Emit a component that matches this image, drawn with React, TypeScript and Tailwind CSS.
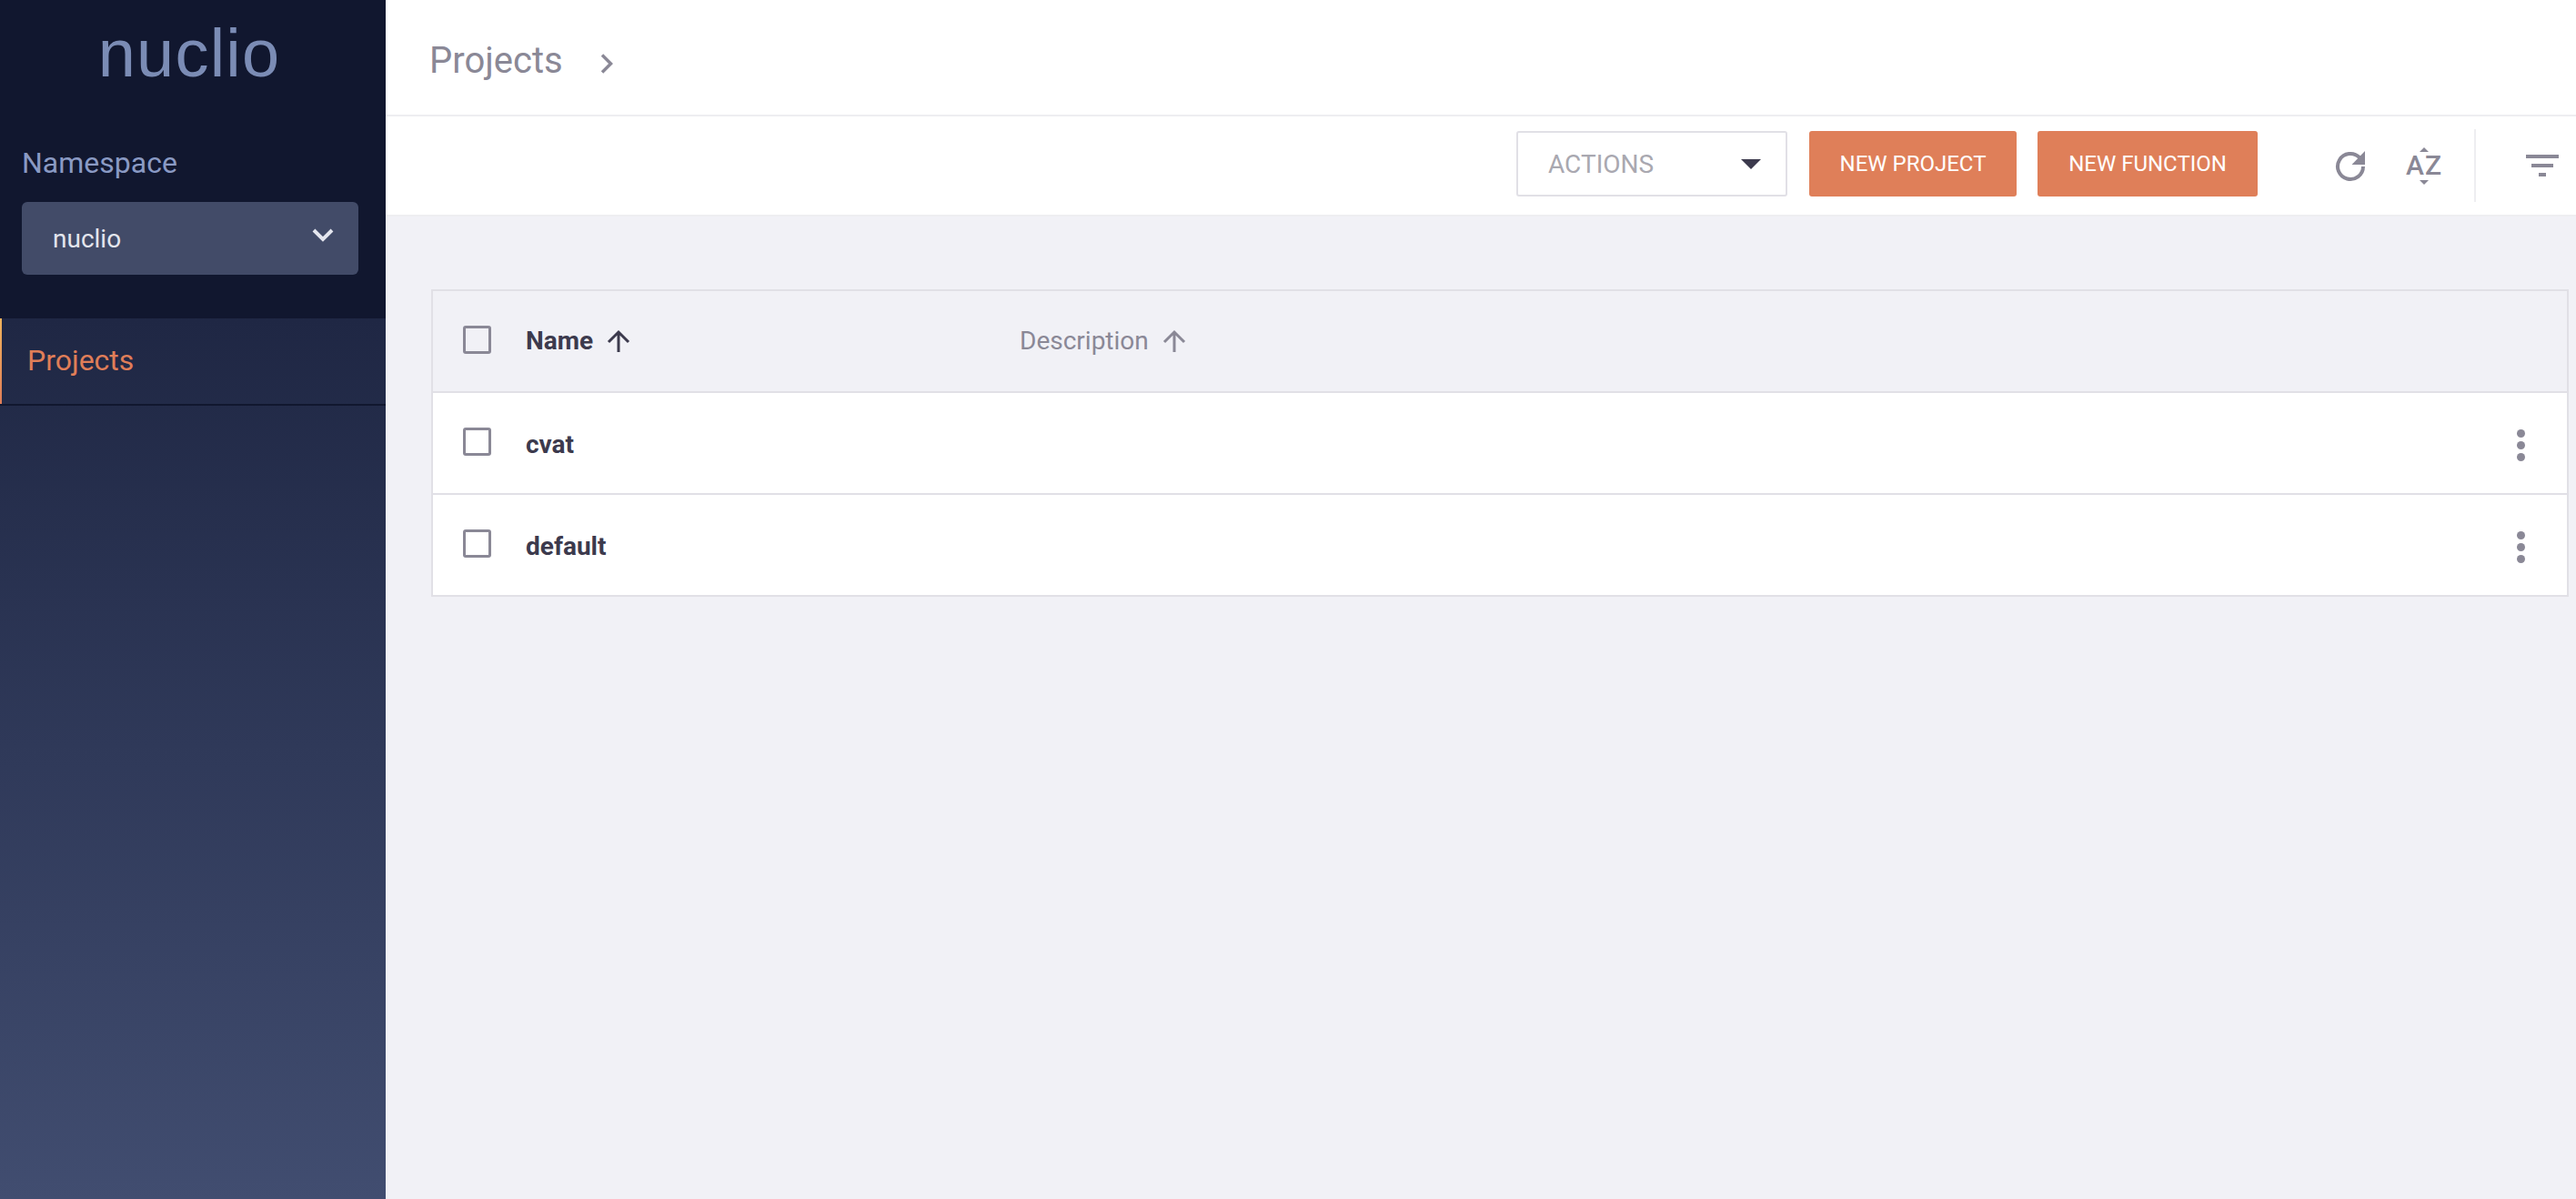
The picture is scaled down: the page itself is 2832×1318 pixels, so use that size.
import React from "react";

const Checkbox = () => (
  <span className="block w-[31px] h-[31px] rounded-[3px] border-[3px] border-[#8a8896] shrink-0" />
);

const ArrowUp = ({ color }: { color: string }) => (
  <svg width="26" height="26" viewBox="0 0 26 26" fill="none" stroke={color} strokeWidth="3">
    <path d="M13 25V3.5M2 14 13 3l11 11" />
  </svg>
);

const Dots = () => (
  <div className="flex flex-col gap-[4.4px] mr-[46px] mt-[5px]">
    <span className="block w-[9px] h-[9px] rounded-full bg-[#8a8896]" />
    <span className="block w-[9px] h-[9px] rounded-full bg-[#8a8896]" />
    <span className="block w-[9px] h-[9px] rounded-full bg-[#8a8896]" />
  </div>
);

const Row = ({ name }: { name: string }) => (
  <div className="h-[112px] last:h-[110px] flex items-center justify-between bg-white border-b-[2px] border-[#e1e0e6] last:border-b-0">
    <div className="flex items-center">
      <div className="ml-[33px] -mt-[4px]">
        <Checkbox />
      </div>
      <span className="ml-[38px] mt-[3px] text-[28px] font-bold text-[#3c3a4d]">{name}</span>
    </div>
    <Dots />
  </div>
);

export default function App() {
  return (
    <div className="flex h-[1318px] w-[2832px] overflow-hidden font-['Roboto',sans-serif] bg-[#f1f1f6]">
      <aside className="w-[424px] shrink-0 flex flex-col">
        <div className="h-[350px] bg-[#11172f] px-[24px] flex flex-col shrink-0">
          <div className="h-[120px] flex items-start justify-center pt-[16px] pr-[8px]">
            <span className="font-['Liberation_Sans',sans-serif] text-[74px] leading-[85px] tracking-[1.2px] text-[#7b8cb5]">nuclio</span>
          </div>
          <div className="mt-[39px] text-[32px] leading-[40px] text-[#8a9ac4]">Namespace</div>
          <div className="mt-[23px] w-[370px] h-[80px] rounded-[6px] bg-[#424b68] flex items-center justify-between pl-[34px] pr-[27px]">
            <span className="text-[28px] mt-[1px] text-[#e4e6ee]">nuclio</span>
            <svg width="24" height="16" viewBox="0 0 24 16" fill="none" stroke="#e4e6ee" strokeWidth="4" className="-mt-[6px]">
              <path d="M2 2l10 10L22 2" />
            </svg>
          </div>
        </div>
        <div className="flex-1 bg-gradient-to-b from-[#1f2744] to-[#414d70]">
          <div className="h-[96px] border-b-[2px] border-[#11172f] flex items-center pl-[30px] pb-[3px] relative">
            <span className="absolute left-0 top-0 bottom-0 w-[2px] bg-gradient-to-b from-[#f0b35c] to-[#e07e58]" />
            <span className="text-[32px] text-[#e07e58]">Projects</span>
          </div>
        </div>
      </aside>

      <main className="flex-1 flex flex-col min-w-0">
        <header className="h-[128px] bg-white border-b-[2px] border-[#eeeef1] flex items-center pl-[48px] pt-[8px] shrink-0">
          <span className="text-[40px] text-[#8a8896]">Projects</span>
          <svg width="14" height="22" viewBox="0 0 14 22" fill="none" stroke="#8a8896" strokeWidth="3.5" className="ml-[41px] mt-[5px]">
            <path d="M2 1.5l9.5 9.5L2 20.5" />
          </svg>
        </header>

        <div className="h-[110px] bg-white border-b-[2px] border-[#eeeef1] flex items-center shrink-0">
          <div className="ml-[1243px] -mt-[4px] w-[298px] h-[72px] rounded-[3px] border-[2px] border-[#e1e0e6] flex items-center justify-between pl-[33px] pr-[27px]">
            <span className="text-[28px] mt-[2px] text-[#a9a8b0]">ACTIONS</span>
            <span className="block w-0 h-0 border-x-[11px] border-x-transparent border-t-[11px] border-t-[#3c3a4d]" />
          </div>
          <button className="ml-[24px] -mt-[4px] w-[228px] h-[72px] rounded-[3px] bg-[#df7f59] text-white text-[24px]">NEW PROJECT</button>
          <button className="ml-[23px] -mt-[4px] w-[242px] h-[72px] rounded-[3px] bg-[#df7f59] text-white text-[24px]">NEW FUNCTION</button>
          <svg width="36" height="36" viewBox="0 0 36 36" fill="none" className="ml-[84px]">
            <path d="M28 9.2A14 14 0 1 0 32 19" stroke="#8a8896" strokeWidth="4" />
            <path d="M34 2v15H19.5z" fill="#8a8896" />
          </svg>
          <div className="ml-[44px] w-[40px] h-[40px] relative">
            <span className="absolute left-[-1px] top-[6px] text-[30px] leading-[28px] text-[#8a8896] font-medium">A</span>
            <span className="absolute left-[20px] top-[6px] text-[30px] leading-[28px] text-[#8a8896] font-medium">Z</span>
            <span className="absolute left-[14px] top-0 w-0 h-0 border-x-[5px] border-x-transparent border-b-[5px] border-b-[#8a8896]" />
            <span className="absolute left-[14px] bottom-[-1px] w-0 h-0 border-x-[5px] border-x-transparent border-t-[5px] border-t-[#8a8896]" />
          </div>
          <div className="ml-[34px] w-[2px] h-[80px] bg-[#eeeef1]" />
          <div className="ml-[55px] flex flex-col items-center gap-[6px]">
            <span className="block w-[36px] h-[4px] bg-[#8a8896]" />
            <span className="block w-[24px] h-[4px] bg-[#8a8896]" />
            <span className="block w-[8px] h-[4px] bg-[#8a8896]" />
          </div>
        </div>

        <div className="pt-[80px] pl-[50px] pr-[8px]">
          <div className="border-[2px] border-[#e1e0e6]">
            <div className="h-[112px] flex items-center border-b-[2px] border-[#e1e0e6]">
              <div className="ml-[33px] -mt-[4px]">
                <Checkbox />
              </div>
              <div className="ml-[38px] w-[543px] flex items-center">
                <span className="text-[28px] font-bold text-[#3c3a4d]">Name</span>
                <span className="ml-[15px]"><ArrowUp color="#3c3a4d" /></span>
              </div>
              <span className="text-[28px] text-[#8a8896]">Description</span>
              <span className="ml-[15px]"><ArrowUp color="#8a8896" /></span>
            </div>
            <Row name="cvat" />
            <Row name="default" />
          </div>
        </div>
      </main>
    </div>
  );
}
